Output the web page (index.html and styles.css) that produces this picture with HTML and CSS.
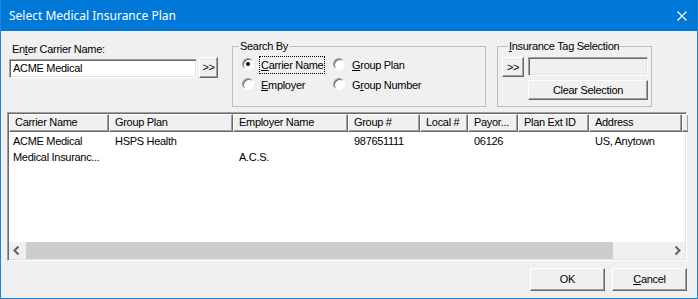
FILE: index.html
```html
<!DOCTYPE html>
<html lang="en">
<head>
    <meta charset="UTF-8">
    <title>Select Medical Insurance Plan</title>
    <link rel="stylesheet" href="styles.css">
</head>
<body>
    <div class="dialog">
        <!-- Title bar -->
        <div class="titlebar">
            <span class="title">Select Medical Insurance Plan</span>
            <svg class="close" width="10" height="10" viewBox="0 0 10 10">
                <path d="M0.5 0.5 L9.5 9.5 M9.5 0.5 L0.5 9.5" stroke="#fff" stroke-width="1.1" fill="none"/>
            </svg>
        </div>

        <div class="main">
            <div class="top">
                <!-- Carrier name -->
                <div class="carrier">
                    <div class="label">En<u>t</u>er Carrier Name:</div>
                    <div class="inputrow">
                        <div class="field carrier-field">ACME Medical</div>
                        <button class="btn btn-go">&gt;&gt;</button>
                    </div>
                </div>

                <!-- Search By -->
                <fieldset class="group search">
                    <legend>Search By</legend>
                    <div class="radios">
                        <div class="radio checked"><span class="dot"></span><span class="focus"><u>C</u>arrier Name</span></div>
                        <div class="radio"><span class="dot"></span><span><u>G</u>roup Plan</span></div>
                        <div class="radio"><span class="dot"></span><span><u>E</u>mployer</span></div>
                        <div class="radio"><span class="dot"></span><span>G<u>r</u>oup Number</span></div>
                    </div>
                </fieldset>

                <!-- Insurance Tag Selection -->
                <fieldset class="group tags">
                    <legend><u>I</u>nsurance Tag Selection</legend>
                    <div class="tagrow">
                        <button class="btn btn-tag">&gt;&gt;</button>
                        <div class="field tag-field"></div>
                    </div>
                    <button class="btn btn-clear">Clear Selection</button>
                </fieldset>
            </div>

            <!-- Results list -->
            <div class="list">
                <div class="header">
                    <div class="hcell">Carrier Name</div>
                    <div class="hcell">Group Plan</div>
                    <div class="hcell">Employer Name</div>
                    <div class="hcell">Group #</div>
                    <div class="hcell">Local #</div>
                    <div class="hcell">Payor...</div>
                    <div class="hcell">Plan Ext ID</div>
                    <div class="hcell">Address</div>
                    <div class="hcell filler"></div>
                </div>
                <div class="rows">
                    <div class="row">
                        <div class="cell">ACME Medical</div>
                        <div class="cell">HSPS Health</div>
                        <div class="cell"></div>
                        <div class="cell">987651111</div>
                        <div class="cell"></div>
                        <div class="cell">06126</div>
                        <div class="cell"></div>
                        <div class="cell">US, Anytown</div>
                    </div>
                    <div class="row">
                        <div class="cell">Medical Insuranc...</div>
                        <div class="cell"></div>
                        <div class="cell">A.C.S.</div>
                        <div class="cell"></div>
                        <div class="cell"></div>
                        <div class="cell"></div>
                        <div class="cell"></div>
                        <div class="cell"></div>
                    </div>
                </div>
                <div class="hscroll">
                    <span class="arrow">
                        <svg width="17" height="17" viewBox="0 0 17 17"><polyline points="9.5,4.5 5.5,8.5 9.5,12.5" stroke="#606060" stroke-width="2" fill="none"/></svg>
                    </span>
                    <div class="track"><div class="thumb"></div></div>
                    <span class="arrow">
                        <svg width="17" height="17" viewBox="0 0 17 17"><polyline points="7.5,4.5 11.5,8.5 7.5,12.5" stroke="#606060" stroke-width="2" fill="none"/></svg>
                    </span>
                </div>
            </div>

            <div class="footer">
                <button class="btn btn-foot">OK</button>
                <button class="btn btn-foot"><u>C</u>ancel</button>
            </div>
        </div>
    </div>
</body>
</html>
```

FILE: styles.css
```css
body {
    margin: 0;
    padding: 0;
    background-color: #f0f0f0;
    font-family: 'Liberation Sans', Arial, sans-serif;
    font-size: 11px;
    letter-spacing: -0.3px;
    color: #000;
}

.dialog {
    width: 698px;
    height: 299px;
    box-sizing: border-box;
    border: 1px solid #1883d7;
    border-top: none;
    background: #f0f0f0;
    overflow: hidden;
}

.titlebar {
    height: 31px;
    background-color: #0078d7;
    display: flex;
    align-items: center;
    justify-content: space-between;
    padding: 0 10px 0 8px;
}

.title {
    font-family: 'Noto Sans', sans-serif;
    font-size: 12px;
    letter-spacing: 0;
    color: #fff;
    line-height: 31px;
}

.close {
    display: block;
}

.main {
    padding: 8px 10px 0 6px;
}

.top {
    display: flex;
    align-items: flex-start;
    height: 68px;
}

/* carrier name */
.carrier {
    margin-left: 2px;
    width: 209px;
}

.label {
    margin-top: 4px;
    padding-left: 3px;
    line-height: 13px;
}

.inputrow {
    display: flex;
    align-items: flex-end;
    margin-top: 1px;
}

.field {
    box-sizing: border-box;
    height: 19px;
    background: #fff;
    border: 1px solid;
    border-color: #a0a0a0 #fff #fff #a0a0a0;
    box-shadow: inset 1px 1px 0 #696969, inset -1px -1px 0 #e3e3e3;
    padding: 1px 2px 0 3px;
    line-height: 15px;
}

.carrier-field {
    width: 188px;
}

.btn {
    box-sizing: border-box;
    font-family: inherit;
    font-size: 11px;
    letter-spacing: -0.3px;
    color: #000;
    background: #f0f0f0;
    border: 1px solid;
    border-color: #fff #696969 #696969 #fff;
    box-shadow: inset -1px -1px 0 #a0a0a0;
    padding: 0;
    margin: 0;
    line-height: 15px;
}

.btn-go {
    width: 19px;
    height: 21px;
    margin-left: 2px;
}

/* group boxes */
.group {
    box-sizing: border-box;
    margin: 0;
    padding: 0;
    border: 1px solid #bdbdbd;
    min-width: 0;
    height: 68px;
}

.group legend {
    margin-left: 6px;
    padding: 0 1px;
    line-height: 14px;
}

.search {
    width: 254px;
    margin-left: 14px;
}

.radios {
    display: grid;
    grid-template-columns: 91px 1fr;
    row-gap: 4px;
    margin-top: 4px;
    padding-left: 9px;
}

.radio {
    display: flex;
    align-items: center;
    line-height: 16px;
    gap: 7px;
}

.dot {
    box-sizing: border-box;
    width: 12px;
    height: 12px;
    margin-top: -2px;
    border-radius: 50%;
    background: #fff;
    border: 1px solid;
    border-color: #a0a0a0 #fff #fff #a0a0a0;
    box-shadow: inset 1px 1px 0 #696969;
    position: relative;
}

.radio.checked .dot::after {
    content: "";
    position: absolute;
    left: 3px;
    top: 3px;
    width: 4px;
    height: 4px;
    border-radius: 50%;
    background: #000;
}

.focus {
    outline: 1px dotted #000;
    outline-offset: 0px;
    padding: 0 1px;
    margin-left: -1px;
}

.tags {
    width: 155px;
    margin-left: 11px;
    padding-left: 4px;
}

.tagrow {
    display: flex;
    align-items: flex-start;
    margin-top: 4px;
}

.btn-tag {
    width: 22px;
    height: 20px;
}

.tag-field {
    width: 120px;
    margin-left: 4px;
    background: #f0f0f0;
}

.btn-clear {
    display: block;
    width: 120px;
    height: 20px;
    margin: 3px 0 0 26px;
}

/* list view */
.list {
    box-sizing: border-box;
    margin-top: 5px;
    width: 680px;
    height: 149px;
    border: 1px solid;
    border-color: #a0a0a0 #fff #fff #a0a0a0;
    box-shadow: inset 1px 1px 0 #696969, inset -1px -1px 0 #e3e3e3;
    padding: 1px;
    background: #fff;
    display: flex;
    flex-direction: column;
}

.header,
.row {
    display: grid;
    grid-template-columns: 100px 124px 115px 72px 48px 50px 71px 93px 1fr;
}

.header {
    height: 18px;
}

.hcell {
    box-sizing: border-box;
    background: #f0f0f0;
    border-top: 1px solid #fff;
    border-left: 1px solid #fff;
    border-right: 1px solid #696969;
    border-bottom: 1px solid #696969;
    box-shadow: inset -1px -1px 0 #a0a0a0;
    padding-left: 5px;
    line-height: 15px;
    white-space: nowrap;
    overflow: hidden;
}

.hcell.filler {
    border-right: none;
}

.rows {
    flex: 1;
    padding-top: 1px;
}

.row {
    height: 16px;
    line-height: 16px;
}

.cell {
    padding-left: 6px;
    white-space: nowrap;
    overflow: hidden;
}

.cell:first-child {
    padding-left: 4px;
}

.hscroll {
    display: flex;
    height: 17px;
    background: #f0f0f0;
}

.arrow {
    width: 17px;
    height: 17px;
}

.arrow svg {
    display: block;
}

.track {
    flex: 1;
}

.thumb {
    width: 587px;
    height: 100%;
    background: #cdcdcd;
}

/* footer buttons */
.footer {
    display: flex;
    justify-content: flex-end;
    gap: 7px;
    margin-top: 7px;
}

.btn-foot {
    width: 75px;
    height: 23px;
}
```
